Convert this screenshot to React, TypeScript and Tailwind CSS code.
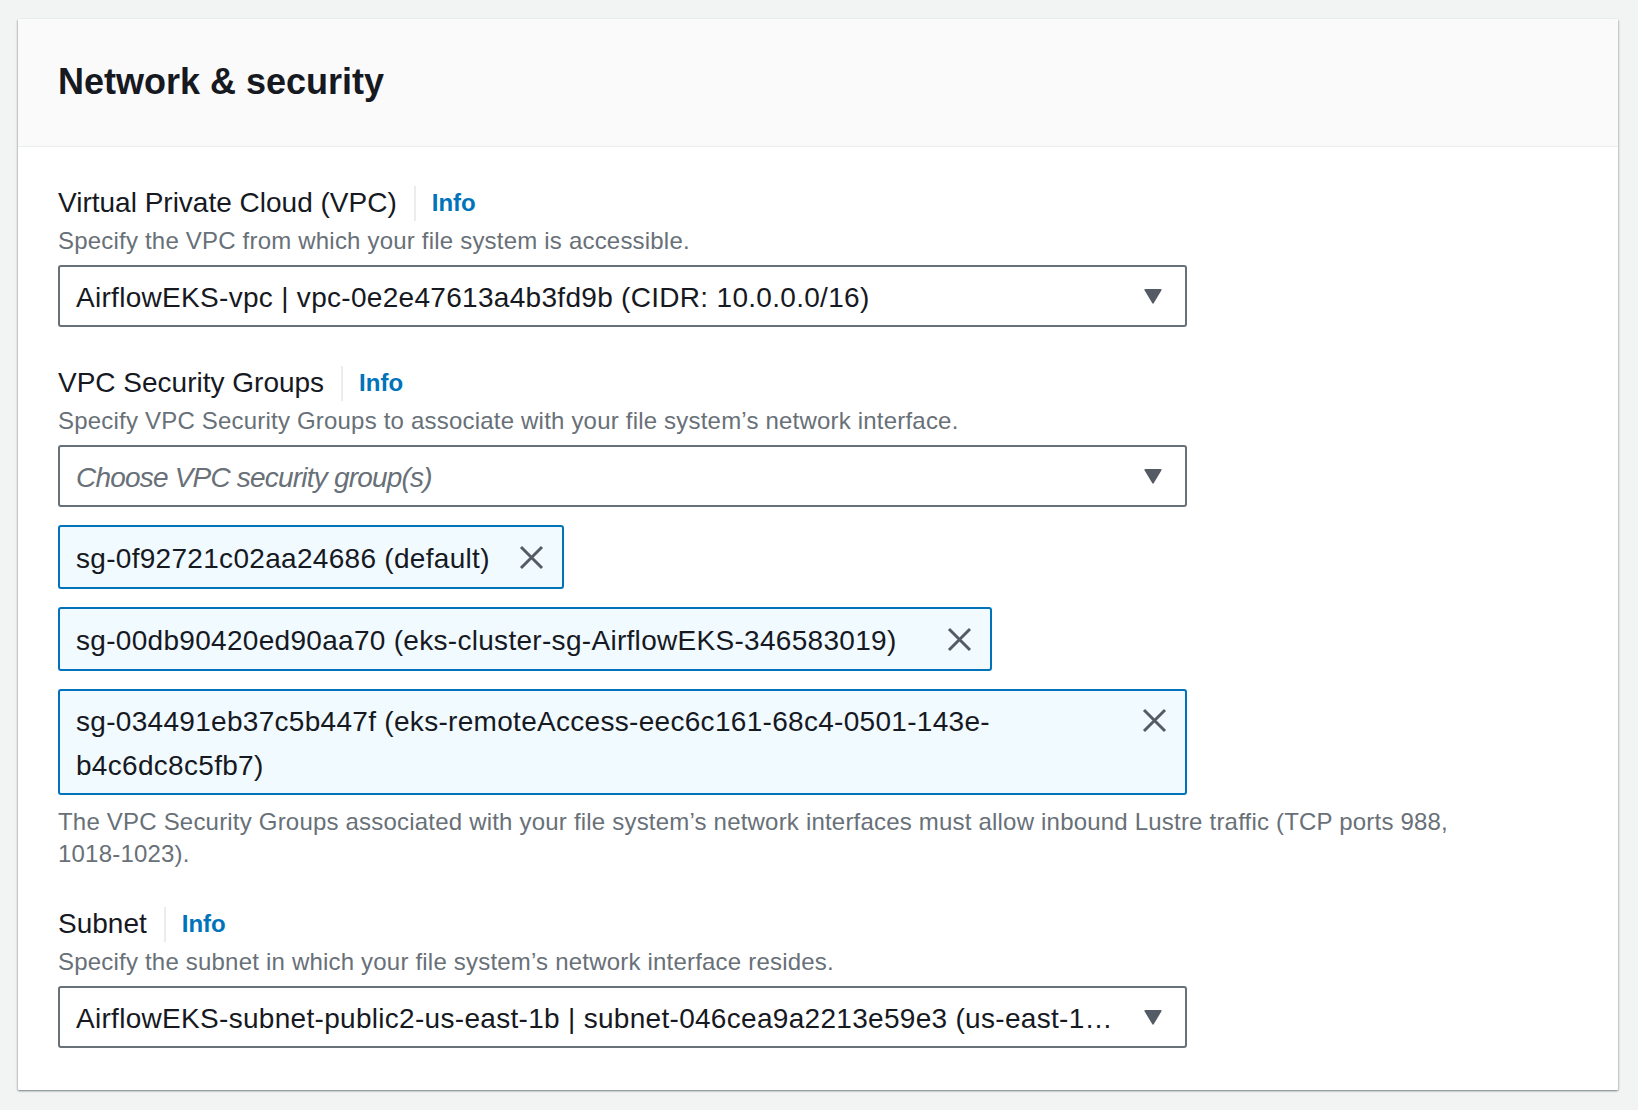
import React from 'react';

// Security groups already picked in the multiselect.
// `width` keeps each token the size it has in the console; `lines` forces the long one to wrap.
const groups: { id: string; lines: string[]; width?: string; pad: string }[] = [
  { id: 'sg-0f92721c02aa24686', lines: ['sg-0f92721c02aa24686 (default)'], width: 'w-[506px]', pad: 'pt-[8px] pb-[6px]' },
  {
    id: 'sg-00db90420ed90aa70',
    lines: ['sg-00db90420ed90aa70 (eks-cluster-sg-AirflowEKS-346583019)'],
    width: 'w-[934px]',
    pad: 'pt-[8px] pb-[6px]',
  },
  {
    id: 'sg-034491eb37c5b447f',
    lines: ['sg-034491eb37c5b447f (eks-remoteAccess-eec6c161-68c4-0501-143e-', 'b4c6dc8c5fb7)'],
    pad: 'pt-[7px] pb-[5px]',
  },
];

function Caret() {
  return (
    <svg width="18" height="16" viewBox="0 0 18 16" className="shrink-0">
      <path d="M1.5 1h15a1 1 0 0 1 .85 1.5l-7.5 12.6a1 1 0 0 1-1.7 0L.65 2.5A1 1 0 0 1 1.5 1z" fill="#545b64" />
    </svg>
  );
}

function Dismiss() {
  return (
    <svg width="25" height="25" viewBox="0 0 25 25" className="shrink-0">
      <path d="M2 2L23 23M23 2L2 23" stroke="#545b64" strokeWidth="3" />
    </svg>
  );
}

function FieldLabel({ label, hint }: { label: string; hint: string }) {
  return (
    <>
      <div className="flex items-center h-[44px]">
        <span className="text-[28px] leading-[44px] text-[#16191f]">{label}</span>
        <span className="ml-[17px] w-[2px] h-[35px] bg-[#eaeded]" />
        <span className="ml-[16px] text-[24px] leading-[44px] font-bold text-[#0073bb]">Info</span>
      </div>
      <p className="text-[24px] leading-[32px] tracking-[0.2px] text-[#687078]">{hint}</p>
    </>
  );
}

function Select({ value, placeholder }: { value?: string; placeholder?: string }) {
  return (
    <div className="mt-[8px] w-[1129px] h-[62px] flex items-center border-2 border-[#687078] rounded-[3px] bg-white pl-[16px] pr-[23px]">
      {value ? (
        <span className="flex-1 min-w-0 mr-[16px] pt-[3px] whitespace-nowrap text-[28px] leading-[44px] tracking-[0.3px] text-[#16191f]">
          {value}
        </span>
      ) : (
        <span className="flex-1 min-w-0 mr-[16px] pt-[3px] whitespace-nowrap text-[28px] leading-[44px] tracking-[-0.8px] italic text-[#687078]">
          {placeholder}
        </span>
      )}
      <Caret />
    </div>
  );
}

export default function App() {
  return (
    <div className="min-h-[1110px] bg-[#f2f3f3] pl-[18px] pr-[20px] pt-[19px] font-['Liberation_Sans',Arial,sans-serif]">
      <div className="bg-white rounded-[1px] shadow-[0_1px_2px_0_rgba(0,28,36,0.3),1px_1px_2px_0_rgba(0,28,36,0.15),-1px_1px_2px_0_rgba(0,28,36,0.15)]">
        <div className="bg-[#fafafa] border-b border-[#eaeded] px-[40px] pt-[41px] pb-[42px]">
          <h2 className="text-[36px] leading-[44px] font-bold text-[#16191f]">Network &amp; security</h2>
        </div>

        <div className="px-[40px] pt-[34px] pb-[42px]">
          {/* VPC */}
          <FieldLabel label="Virtual Private Cloud (VPC)" hint="Specify the VPC from which your file system is accessible." />
          <Select value="AirflowEKS-vpc | vpc-0e2e47613a4b3fd9b (CIDR: 10.0.0.0/16)" />

          {/* Security groups */}
          <div className="mt-[34px]">
            <FieldLabel
              label="VPC Security Groups"
              hint="Specify VPC Security Groups to associate with your file system’s network interface."
            />
            <Select placeholder="Choose VPC security group(s)" />
            <div className="flex flex-col items-start">
              {groups.map((g) => (
                <div
                  key={g.id}
                  className={`mt-[18px] flex items-start justify-between border-2 border-[#0073bb] rounded-[3px] bg-[#f1faff] pl-[16px] pr-[18px] ${g.pad} ${g.width ?? 'w-[1129px]'}`}
                >
                  <span className="pt-[2px] text-[28px] leading-[44px] tracking-[0.3px] text-[#16191f]">
                    {g.lines.map((line, i) => (
                      <React.Fragment key={i}>
                        {i > 0 && <br />}
                        {line}
                      </React.Fragment>
                    ))}
                  </span>
                  <span className="mt-[10px]">
                    <Dismiss />
                  </span>
                </div>
              ))}
            </div>
            <p className="mt-[11px] text-[24px] leading-[32px] tracking-[0.2px] text-[#687078]">
              The VPC Security Groups associated with your file system’s network interfaces must allow inbound Lustre traffic (TCP ports 988,
              <br />
              1018-1023).
            </p>
          </div>

          {/* Subnet — the console cuts the value off with an ellipsis */}
          <div className="mt-[32px]">
            <FieldLabel label="Subnet" hint="Specify the subnet in which your file system’s network interface resides." />
            <Select value="AirflowEKS-subnet-public2-us-east-1b | subnet-046cea9a2213e59e3 (us-east-1…" />
          </div>
        </div>
      </div>
    </div>
  );
}
